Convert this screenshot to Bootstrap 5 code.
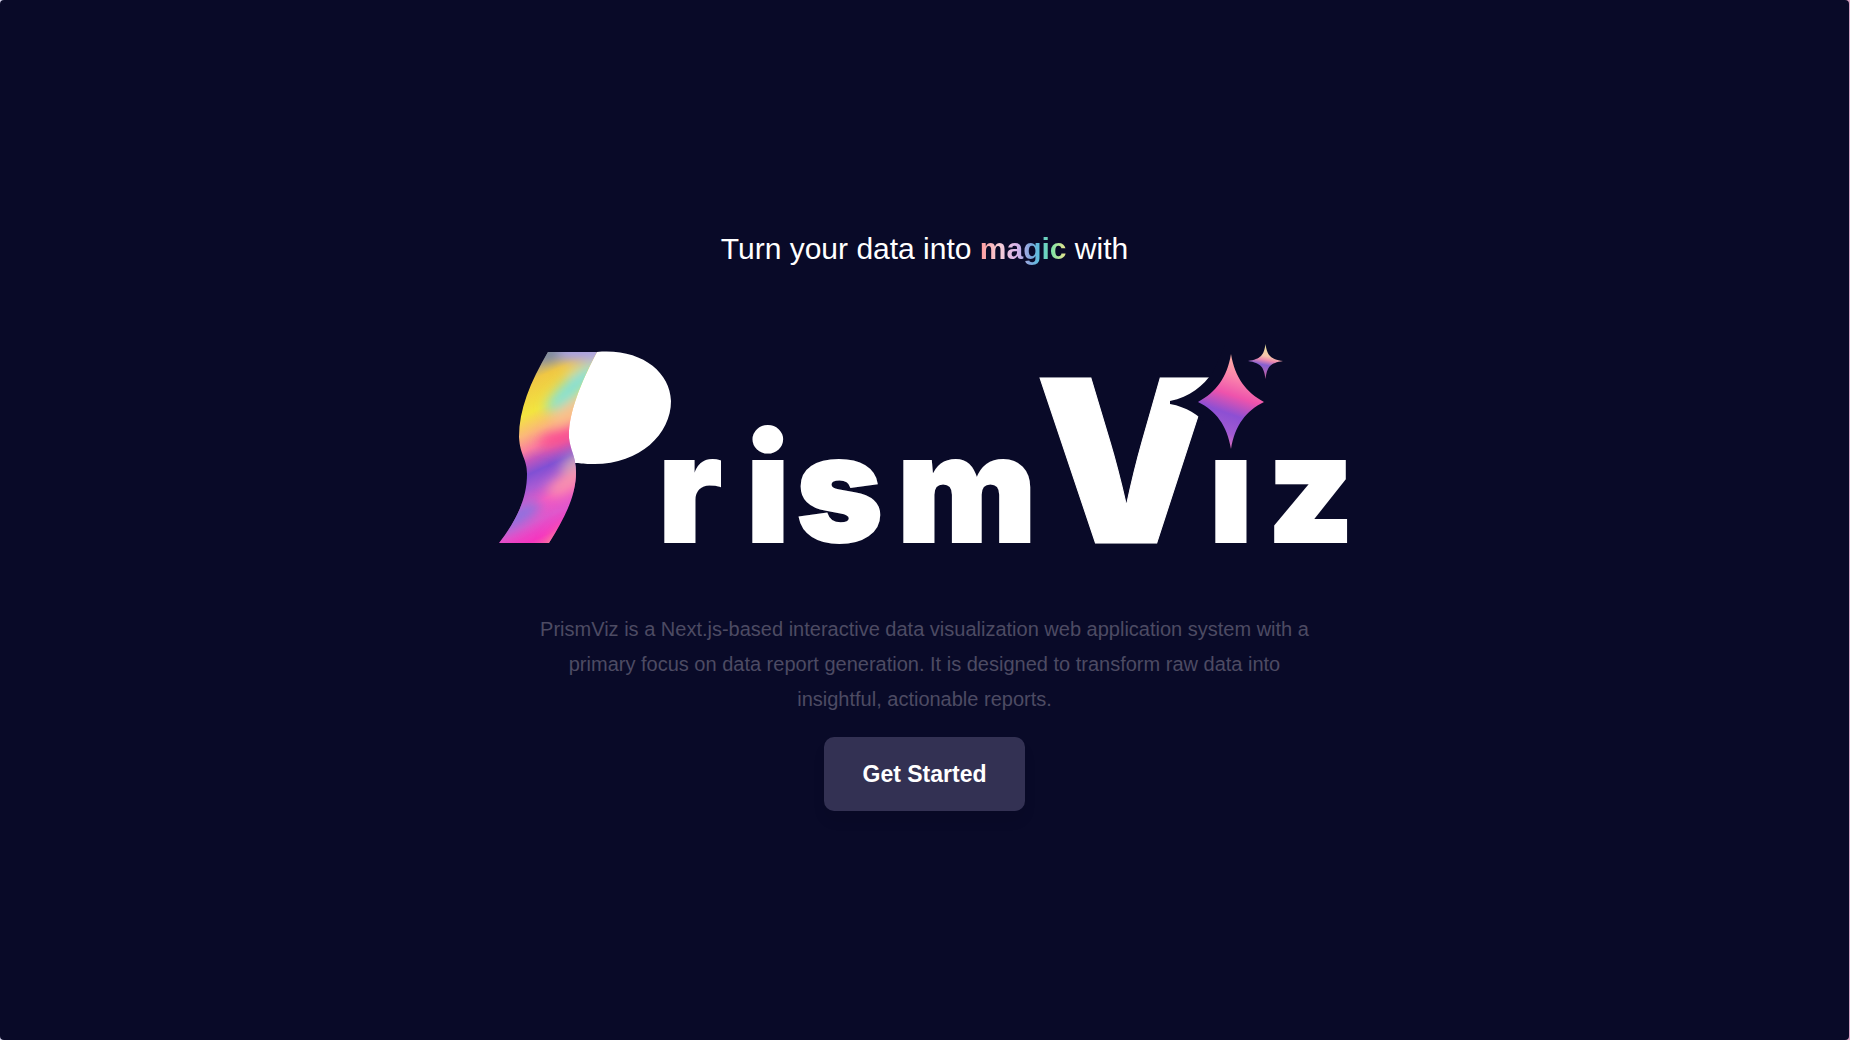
<!DOCTYPE html>
<html lang="en">
<head>
<meta charset="utf-8">
<meta name="viewport" content="width=device-width, initial-scale=1">
<title>PrismViz</title>
<link href="https://cdn.jsdelivr.net/npm/bootstrap@5.3.0/dist/css/bootstrap.min.css" rel="stylesheet">
<style>
  body { background: linear-gradient(90deg, #d9d6ee, #d9a3c4); font-family: "Liberation Sans", Arial, sans-serif; padding-right: 1px; }
  .hero { background: #090a28; border-radius: 4px; }
  .tagline { font-size: 30px; line-height: 40px; margin-bottom: 66px; }
  .magic { background: linear-gradient(90deg, #ff9a9e 0%, #f8cfd6 22%, #d9b3ea 42%, #7fa6dc 58%, #5cc0dc 68%, #7be3a8 82%, #f3e58a 100%); -webkit-background-clip: text; background-clip: text; color: transparent; }
  .logo { width: 880px; max-width: 100%; overflow: visible; }
  .logo text { font-family: Inter, "DejaVu Sans", sans-serif; font-weight: 900; fill: #fff; stroke: #fff; }
  .intro { font-size: 20px; line-height: 35px; max-width: 800px; color: #4d4b63; margin-top: 57px; margin-bottom: 20px; }
  .start-btn { --bs-btn-color: #fff; --bs-btn-bg: #333153; --bs-btn-hover-color: #fff; --bs-btn-hover-bg: #413f66; --bs-btn-border-width: 0; --bs-btn-border-radius: 10px; --bs-btn-font-size: 23px; --bs-btn-font-weight: 700; --bs-btn-padding-x: 39px; --bs-btn-padding-y: 20px; --bs-btn-line-height: 34px; line-height: 34px; box-shadow: 0 10px 15px -3px rgba(0,0,20,.1); }
</style>
</head>
<body>
<main class="hero min-vh-100 d-flex flex-column align-items-center justify-content-center text-center text-white px-3">
  <h1 class="tagline fw-normal">Turn your data into <strong class="magic">magic</strong> with</h1>
  <svg class="logo" viewBox="485 335 880 220" role="img" aria-label="PrismViz">
    <defs>
      <clipPath id="ribbon"><path d="M548 352H597C580 384 568 415 569 438C570 449 576 457 576 472C576 495 566 516 549 543H499C517 520 527 498 527 474C527 458 520 456 519 437C519 410 530 382 548 352Z"/></clipPath>
      <linearGradient id="bands" gradientUnits="userSpaceOnUse" x1="505" y1="347" x2="590" y2="535">
        <stop offset="0" stop-color="#7d86a0"/><stop offset=".13" stop-color="#a09c98"/>
        <stop offset=".2" stop-color="#f0c744"/><stop offset=".34" stop-color="#f3e53f"/>
        <stop offset=".43" stop-color="#fbb77a"/><stop offset=".5" stop-color="#fa7fa0"/>
        <stop offset=".55" stop-color="#c256bd"/><stop offset=".61" stop-color="#8050d4"/>
        <stop offset=".68" stop-color="#ac5cd4"/><stop offset=".75" stop-color="#f257c2"/>
        <stop offset=".83" stop-color="#e058cc"/><stop offset=".91" stop-color="#f536c0"/><stop offset="1" stop-color="#fa70a0"/>
      </linearGradient>
      <linearGradient id="gem" gradientUnits="userSpaceOnUse" x1="1244" y1="358" x2="1214" y2="446">
        <stop offset="0" stop-color="#ffb3a2"/><stop offset=".22" stop-color="#fb86ac"/><stop offset=".42" stop-color="#ee53ac"/><stop offset=".62" stop-color="#8d4fd3"/><stop offset=".82" stop-color="#a05bd2"/><stop offset="1" stop-color="#ee72bb"/>
      </linearGradient>
      <linearGradient id="gemSmall" x1=".6" y1="0" x2=".4" y2="1">
        <stop offset="0" stop-color="#e8e89a"/><stop offset=".35" stop-color="#f6c4ab"/><stop offset=".46" stop-color="#ee8aae"/><stop offset=".6" stop-color="#8660d0"/><stop offset="1" stop-color="#d2609a"/>
      </linearGradient>
      <filter id="soft" x="-60%" y="-60%" width="220%" height="220%"><feGaussianBlur stdDeviation="6"/></filter>
    </defs>
    <path fill="#fff" d="M597 352C640 348 670 371 671 401C671 435 638 466 590 464C583 464 579 463 575 463L560 440L580 370Z"/>
    <g clip-path="url(#ribbon)">
      <rect x="490" y="345" width="120" height="205" fill="url(#bands)"/>
      <g filter="url(#soft)">
        <ellipse cx="585" cy="352" rx="34" ry="9" fill="#a7a0ec"/>
        <ellipse cx="548" cy="352" rx="12" ry="9" fill="#7d8a9c"/>
        <ellipse cx="586" cy="368" rx="22" ry="4" fill="#e8d09a" transform="rotate(-20 586 368)"/>
        <ellipse cx="572" cy="388" rx="34" ry="9" fill="#84e0d8" transform="rotate(-42 572 388)"/>
        <ellipse cx="572" cy="411" rx="24" ry="7" fill="#fbc08c" transform="rotate(-35 572 411)"/>
        <ellipse cx="563" cy="437" rx="26" ry="8" fill="#fa4f90" transform="rotate(-18 563 437)"/>
        <ellipse cx="576" cy="461" rx="18" ry="7" fill="#c4a4bc" transform="rotate(-35 576 461)"/>
        <ellipse cx="570" cy="481" rx="26" ry="9" fill="#f991ad" transform="rotate(-30 570 481)"/>
        <ellipse cx="516" cy="517" rx="28" ry="9" fill="#8b72e0" transform="rotate(-30 516 517)"/>
        <ellipse cx="560" cy="540" rx="20" ry="8" fill="#fb8794" transform="rotate(-45 560 540)"/>
      </g>
    </g>
    <text font-size="148" stroke-width="2" y="542" x="658 746 796 897">rism</text>
    <text font-size="227" stroke-width="1" x="1035" y="543">V</text>
    <text font-size="148" stroke-width="2" y="542" x="1209 1267">iz</text>
    <path fill="#090a28" d="M1170 401C1190 397 1203 386 1213 372L1225 345H1260V456H1207V424C1198 415 1187 407 1170 404Z"/>
    <path fill="url(#gem)" d="M1231 354C1235 378 1246 392 1264 402C1246 411 1235 425 1231 449C1227 425 1216 411 1198 402C1216 392 1227 378 1231 354Z"/>
    <path fill="url(#gemSmall)" d="M1265.500 344C1267 355 1270 359 1283 361C1270 363 1267 367 1265.500 379C1264 367 1261 363 1248 361C1261 359 1264 355 1265.500 344Z"/>
  </svg>
  <p class="intro">PrismViz is a Next.js-based interactive data visualization web application system with a primary focus on data report generation. It is designed to transform raw data into insightful, actionable reports.</p>
  <button type="button" class="btn start-btn">Get Started</button>
</main>
<script src="https://cdn.jsdelivr.net/npm/bootstrap@5.3.0/dist/js/bootstrap.bundle.min.js"></script>
</body>
</html>
